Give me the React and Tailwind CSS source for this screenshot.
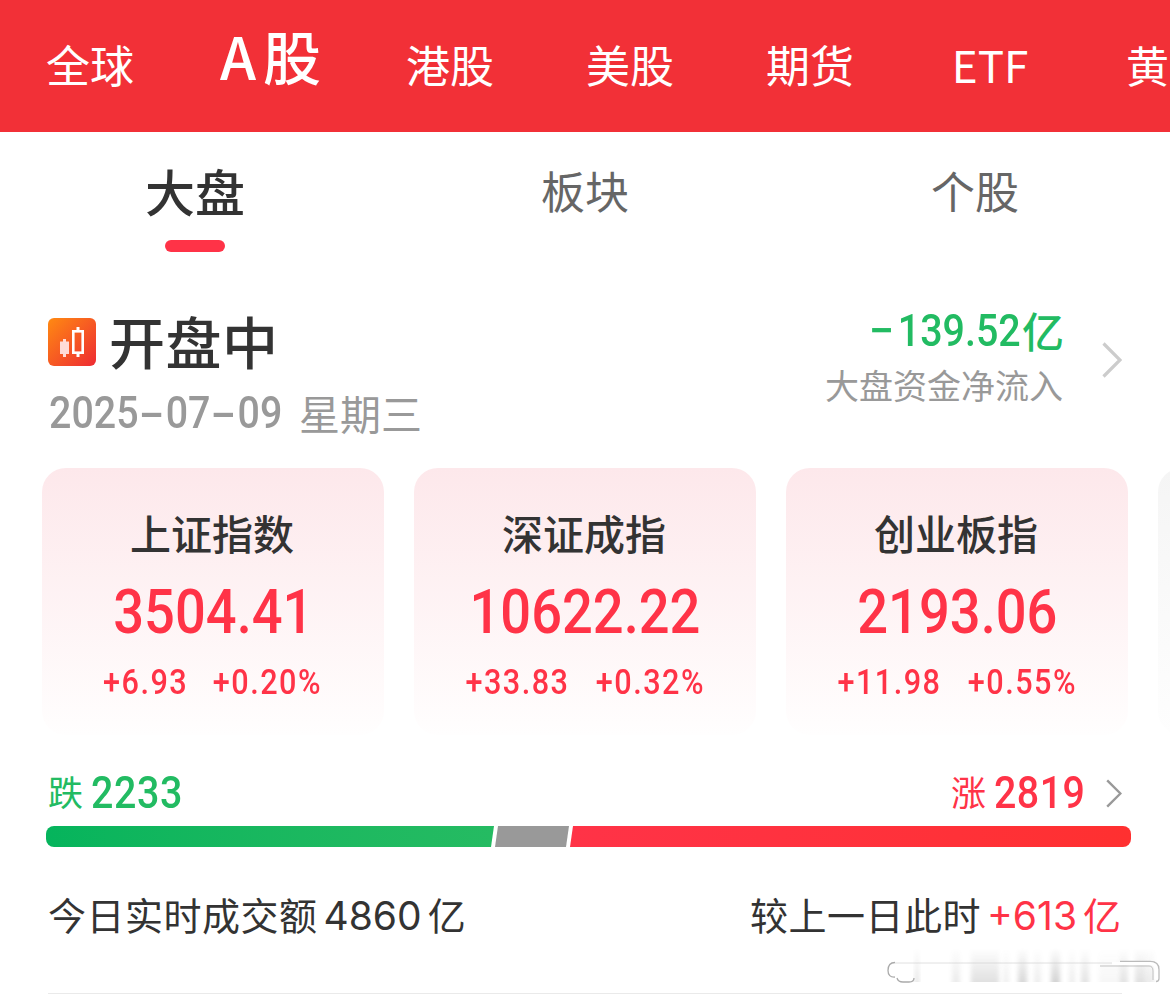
import clsx from 'clsx';

const MARKETS = ['全球', 'A股', '港股', '美股', '期货', 'ETF'];
const TABS = ['大盘', '板块', '个股'];

const INDEXES = [
  { name: '上证指数', value: '3504.41', change: '+6.93', percent: '+0.20%' },
  { name: '深证成指', value: '10622.22', change: '+33.83', percent: '+0.32%' },
  { name: '创业板指', value: '2193.06', change: '+11.98', percent: '+0.55%' },
];

// Narrow figures: Roboto squeezed horizontally
const Num = ({ children, className, origin = 'origin-left' }) => (
  <span className={clsx("inline-block whitespace-nowrap font-['Roboto',sans-serif] font-medium scale-x-[0.875]", origin, className)}>
    {children}
  </span>
);

const Chevron = ({ className, strokeWidth }) => (
  <svg className={className} viewBox="0 0 20 36" fill="none" stroke="currentColor" strokeWidth={strokeWidth}>
    <path d="M1.5 1.5 18 18 1.5 34.5" />
  </svg>
);

const MarketIcon = () => (
  <svg className="w-12 h-12" viewBox="0 0 48 48">
    <defs>
      <linearGradient id="market" x1="0" y1="0" x2="1" y2="1">
        <stop offset="0" stopColor="#ff8a12" />
        <stop offset="1" stopColor="#ee2b33" />
      </linearGradient>
    </defs>
    <rect width="48" height="48" rx="6" fill="url(#market)" />
    <path d="M12 23.500h3V21h3v2.500h3V36h-3v3h-3v-3h-3z" fill="#ffdcd6" />
    <rect x="25.300" y="13.300" width="9.400" height="21.400" fill="none" stroke="#fff" strokeWidth="2.600" />
    <path d="M28.500 9h3v4h-3zM28.500 35h3v4h-3z" fill="#fff" />
  </svg>
);

const MarketNav = () => (
  <nav className="flex h-[132px] bg-[#f23037] text-white overflow-hidden">
    {MARKETS.map((market) => {
      const active = market === 'A股';
      return (
        <div
          key={market}
          className={clsx(
            'w-[180px] shrink-0 text-center whitespace-nowrap',
            active ? 'pl-[8px] text-[58px] leading-[111px] font-medium tracking-[7px]' : 'text-[44px] leading-[128px]'
          )}
        >
          {market}
        </div>
      );
    })}
    <div className="ml-[46px] shrink-0 text-[43px] leading-[128px]">黄</div>
  </nav>
);

const SubTabs = () => (
  <div className="grid grid-cols-3 h-[168px]">
    {TABS.map((tab, i) => (
      <div key={tab} className="flex flex-col items-center">
        <span
          className={clsx(
            'h-[108px]',
            i === 0 ? 'text-[50px] leading-[116px] font-medium text-[#333]' : 'text-[44px] leading-[117px] text-[#666]'
          )}
        >
          {tab}
        </span>
        {i === 0 && <span className="w-[60px] h-3 rounded-full bg-[#ff3347]" />}
      </div>
    ))}
  </div>
);

const Status = () => (
  <section className="flex justify-between h-[168px] px-12">
    <div>
      <div className="flex items-center h-[84px] gap-[13px]">
        <MarketIcon />
        <h1 className="pb-[4px] text-[56px] leading-[80px] font-medium tracking-[0.5px] text-[#333]">开盘中</h1>
      </div>
      <div className="flex h-[60px] pl-px text-[#999]">
        <Num className="w-[250px] text-[45px] leading-[58px]">
          2025<span className="inline-block w-[31px] text-center scale-x-[1.9]">-</span>07
          <span className="inline-block w-[31px] text-center scale-x-[1.9]">-</span>09
        </Num>
        <span className="text-[41px] leading-[57px]">星期三</span>
      </div>
    </div>
    <div className="flex gap-[38px]">
      <div className="flex flex-col items-end">
        <div className="flex items-center h-[61px] text-[#22bb62]">
          <Num className="mr-px text-[45px]" origin="origin-right">
            <span className="inline-block mr-[6px] scale-x-[1.15]">−</span>139.52
          </Num>
          <span className="pb-[2px] text-[42px] leading-[59px] font-medium">亿</span>
        </div>
        <span className="pr-px text-[34px] leading-[48px] text-[#999]">大盘资金净流入</span>
      </div>
      <Chevron className="w-5 h-9 mt-[42px] text-[#ccc]" strokeWidth={3.2} />
    </div>
  </section>
);

const IndexCard = ({ item }) => (
  <div className="flex flex-col items-center w-[342px] h-[267px] shrink-0 rounded-[24px] bg-linear-to-b from-[#fde8eb] to-[#fffefe]">
    <h2 className="mt-[34px] pr-[2px] text-[41px] leading-[60px] font-medium text-[#333]">{item.name}</h2>
    <Num className="mt-[14px] text-[62px] leading-[72px] text-[#ff3347]" origin="origin-center">{item.value}</Num>
    <div className="flex justify-center mt-[11px] pl-px gap-[11px] text-[35px] leading-[48px] tracking-[1.7px] text-[#ff3347]">
      <Num origin="origin-center">{item.change}</Num>
      <Num origin="origin-center">{item.percent}</Num>
    </div>
  </div>
);

const Breadth = () => (
  <section className="mt-[33px]">
    <div className="flex items-center justify-between h-[50px] px-12 text-[35px] leading-[50px]">
      <div className="flex items-center text-[#22bb62]">
        <span className="mr-2 pb-[5px]">跌</span>
        <Num className="text-[45px] tracking-[0.7px]">2233</Num>
      </div>
      <div className="flex items-center text-[#ff3347]">
        <span className="mr-2 pb-[5px]">涨</span>
        <Num className="w-[112px] text-[45px] tracking-[0.5px]">2819</Num>
        <Chevron className="w-4 h-[31px] text-[#999]" strokeWidth={3} />
      </div>
    </div>
    <div className="flex h-[21px] mt-[8px] ml-[46px] w-[1085px] rounded-lg overflow-hidden">
      <div className="w-[448px] bg-linear-to-r from-[#05b45c] to-[#25bb62] [clip-path:polygon(0_0,100%_0,calc(100%_-_3px)_100%,0_100%)]" />
      <div className="w-[74px] ml-px bg-[#999] [clip-path:polygon(3px_0,100%_0,calc(100%_-_3px)_100%,0_100%)]" />
      <div className="flex-1 ml-px bg-linear-to-r from-[#ff3347] to-[#ff3030] [clip-path:polygon(3px_0,100%_0,100%_100%,0_100%)]" />
    </div>
  </section>
);

const Turnover = () => (
  <section className="flex justify-between items-center h-[60px] mt-[39px] px-12 text-[38px] leading-[60px] text-[#333]">
    <div className="flex items-center">
      <span className="pb-[5px] tracking-[0.5px]">今日实时成交额</span>
      <span className="mx-[6px] font-['Inter',sans-serif] text-[39px]">4860</span>
      <span className="pb-[5px]">亿</span>
    </div>
    <div className="flex items-center pr-px">
      <span className="pb-[5px] tracking-[0.5px]">较上一日此时</span>
      <span className="flex items-center text-[#ff3347]">
        <span className="mx-[6px] font-['Inter',sans-serif] text-[39px]">+613</span>
        <span className="pb-[5px]">亿</span>
      </span>
    </div>
  </section>
);

// Vertical grey streaks: [x, width, opacity]
const STREAKS = [
  [36, 4, 0.2], [73, 8, 0.14], [92, 28, 0.22], [124, 6, 0.1], [139, 9, 0.28], [155, 7, 0.12],
  [172, 9, 0.32], [190, 6, 0.12], [202, 8, 0.2], [220, 22, 0.06], [241, 8, 0.2], [256, 10, 0.22], [266, 9, 0.14],
];

const Smudge = () => (
  <svg className="w-[284px] h-[42px]" viewBox="0 0 284 42">
    <defs>
      <linearGradient id="streak" x1="0" y1="0" x2="0" y2="1">
        <stop offset="0" stopColor="#777" stopOpacity="0" />
        <stop offset="1" stopColor="#777" />
      </linearGradient>
      <filter id="soft" x="-50%" width="200%">
        <feGaussianBlur stdDeviation="2 0.500" />
      </filter>
      <filter id="edge">
        <feGaussianBlur stdDeviation="0.500" />
      </filter>
    </defs>
    {STREAKS.map(([x, width, opacity]) => (
      <rect key={x} x={x - 1} y="3" width={width} height="34" fill="url(#streak)" opacity={opacity} filter="url(#soft)" />
    ))}
    <g fill="none" filter="url(#edge)">
      <path d="M15 17.500q-7 0-7 8 0 7 7 6.500M17 33q1 4 6 4h6q5 0 5-4" stroke="#aaa" strokeWidth="1.300" />
      <path d="M15 18h225" stroke="#ccc" strokeOpacity="0.600" />
      <path d="M240 16.500h30q9 0 9 8v9q0 3-3 3" stroke="#bbb" strokeWidth="1.300" />
      <path d="M232 18.500h38q6 0 6 5v11" stroke="#fff" strokeWidth="3" />
      <path d="M220 21h49q4 0 4 5v9" stroke="#aaa" strokeOpacity="0.700" />
    </g>
  </svg>
);

const App = () => (
  <div className="relative w-[1170px] h-[994px] overflow-hidden bg-white font-['Noto_Sans_CJK_SC',sans-serif]">
    <MarketNav />
    <SubTabs />
    <Status />
    <section className="flex gap-[30px] pl-[42px] overflow-hidden">
      {INDEXES.map((item) => (
        <IndexCard key={item.name} item={item} />
      ))}
      <div className="w-[342px] shrink-0 rounded-[24px] bg-linear-to-b from-[#f5f5f5] to-[#fefefe]" />
    </section>
    <Breadth />
    <Turnover />
    <div className="h-px mx-12 mt-[47px] bg-[#eaeaea]" />
    <div className="absolute left-[880px] top-[945px]">
      <Smudge />
    </div>
  </div>
);

export default App;
